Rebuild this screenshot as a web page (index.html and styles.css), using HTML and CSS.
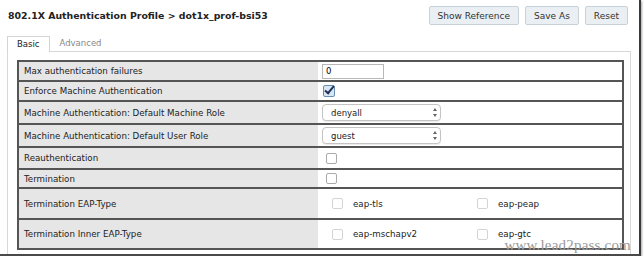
FILE: index.html
```html
<!DOCTYPE html>
<html lang="en">
<head>
  <meta charset="UTF-8" />
  <title>802.1X Authentication Profile</title>
  <link rel="stylesheet" href="styles.css">
</head>
<body>
  <div class="frame">
    <div class="header">
      <h1>802.1X Authentication Profile &gt; dot1x_prof-bsi53</h1>
      <div class="actions">
        <button>Show Reference</button>
        <button>Save As</button>
        <button>Reset</button>
      </div>
    </div>

    <div class="tabs">
      <span class="tab active">Basic</span>
      <span class="tab">Advanced</span>
    </div>

    <div class="panel">
      <table class="profile">
        <tr class="r1">
          <td class="label">Max authentication failures</td>
          <td class="value"><input type="text" class="num" value="0" /></td>
        </tr>
        <tr class="r2">
          <td class="label">Enforce Machine Authentication</td>
          <td class="value"><span class="check on"></span></td>
        </tr>
        <tr class="r3">
          <td class="label">Machine Authentication: Default Machine Role</td>
          <td class="value"><span class="select">denyall<i class="arrows"></i></span></td>
        </tr>
        <tr class="r3">
          <td class="label">Machine Authentication: Default User Role</td>
          <td class="value"><span class="select">guest<i class="arrows"></i></span></td>
        </tr>
        <tr class="r5">
          <td class="label">Reauthentication</td>
          <td class="value"><span class="check"></span></td>
        </tr>
        <tr class="r6">
          <td class="label">Termination</td>
          <td class="value"><span class="check"></span></td>
        </tr>
        <tr class="r7">
          <td class="label">Termination EAP-Type</td>
          <td class="value">
            <div class="options">
              <span class="opt"><span class="check faint"></span>eap-tls</span>
              <span class="opt"><span class="check faint"></span>eap-peap</span>
            </div>
          </td>
        </tr>
        <tr class="r8">
          <td class="label">Termination Inner EAP-Type</td>
          <td class="value">
            <div class="options">
              <span class="opt"><span class="check faint"></span>eap-mschapv2</span>
              <span class="opt"><span class="check faint"></span>eap-gtc</span>
            </div>
          </td>
        </tr>
      </table>
    </div>
    <span class="watermark">www.lead2pass.com</span>
  </div>
</body>
</html>
```

FILE: styles.css
```css
body {
  margin: 0;
  background: #fff;
  font-family: "DejaVu Sans", Verdana, sans-serif;
  color: #222;
}

.frame {
  position: relative;
  width: 639px;
  height: 254px;
  border-right: 2px solid #3a3a3a;
  border-bottom: 2px solid #4a4a4a;
  box-shadow: 1px 1px 2px rgba(0, 0, 0, 0.35);
  overflow: hidden;
}

.header {
  display: flex;
  justify-content: space-between;
  align-items: center;
  padding: 6px 11px 0 8px;
}

h1 {
  margin: 0;
  font-size: 9.4px;
  font-weight: bold;
  color: #222;
}

.actions {
  display: flex;
  gap: 6px;
}

button {
  height: 19px;
  padding: 0 8px;
  font-family: "DejaVu Sans", Verdana, sans-serif;
  font-size: 9px;
  color: #333;
  background: #e9eff3;
  border: 1px solid #c9d1d8;
  border-radius: 2px;
}

.tabs {
  display: flex;
  margin: 10px 0 0 7px;
}

.tab {
  padding: 2px 9px 3px;
  font-size: 8.5px;
  color: #888;
  border: 1px solid transparent;
  border-bottom: none;
}

.tab.active {
  color: #222;
  background: #fff;
  border-color: #d4d4d4;
  position: relative;
  top: 1px;
}

.panel {
  margin: 0 8px 0 7px;
  padding: 8px 7px 0 9px;
  height: 200px;
  border: 1px solid #d8d8d8;
  border-bottom: none;
}

.profile {
  width: 607px;
  border-collapse: collapse;
  border: 2px solid #555;
  font-size: 8.7px;
}

.profile td {
  border-top: 2px solid #555;
  padding: 0;
}

.label {
  width: 296px;
  padding-left: 5px !important;
  background: #e6e6e6;
  color: #222;
}

.value {
  padding-left: 4px !important;
  background: #fff;
}

.r1 { height: 20px; }
.r2 { height: 20px; }
.r3 { height: 23px; }
.r5 { height: 22px; }
.r6 { height: 19px; }
.r7 { height: 31px; }
.r8 { height: 30px; }

.num {
  display: block;
  width: 54px;
  height: 13px;
  padding: 0 3px;
  margin: 0;
  font-family: "DejaVu Sans", Verdana, sans-serif;
  font-size: 8.5px;
  border: 1px solid #b8b8b8;
}

.check {
  display: inline-block;
  width: 9px;
  height: 9px;
  margin-left: 4px;
  border: 1px solid #aaa;
  border-radius: 2px;
  background: #fff;
  vertical-align: middle;
}

.check.faint {
  border-color: #d4d4d4;
  margin: 0 10px 0 0;
}

.check.on {
  margin-left: 1px;
  width: 10px;
  height: 10px;
  border-color: #6a8db3;
  background: #d8e6f4;
  position: relative;
}

.check.on::after {
  content: "";
  position: absolute;
  left: 3px;
  top: -2px;
  width: 3px;
  height: 8px;
  border: solid #1f2f55;
  border-width: 0 2px 2px 0;
  transform: rotate(40deg);
}

.select {
  display: flex;
  align-items: center;
  justify-content: space-between;
  width: 104px;
  height: 15px;
  padding: 0 5px 0 8px;
  border: 1px solid #c4c4c4;
  border-radius: 4px;
  background: #fff;
  font-size: 8.5px;
  color: #222;
  box-shadow: 0 1px 1px rgba(0, 0, 0, 0.08);
}

.arrows {
  width: 0;
  height: 9px;
  position: relative;
}

.arrows::before,
.arrows::after {
  content: "";
  position: absolute;
  left: -2px;
  border-left: 2px solid transparent;
  border-right: 2px solid transparent;
}

.arrows::before {
  top: 0;
  border-bottom: 3px solid #666;
}

.arrows::after {
  bottom: 0;
  border-top: 3px solid #666;
}

.options {
  display: flex;
  padding-left: 10px;
}

.opt {
  display: flex;
  align-items: center;
  width: 145px;
  color: #222;
}

.watermark {
  position: absolute;
  right: 8px;
  bottom: 1px;
  font-family: "Liberation Serif", "Times New Roman", serif;
  font-size: 15px;
  line-height: 15px;
  color: #999;
  letter-spacing: 0.2px;
}
```
